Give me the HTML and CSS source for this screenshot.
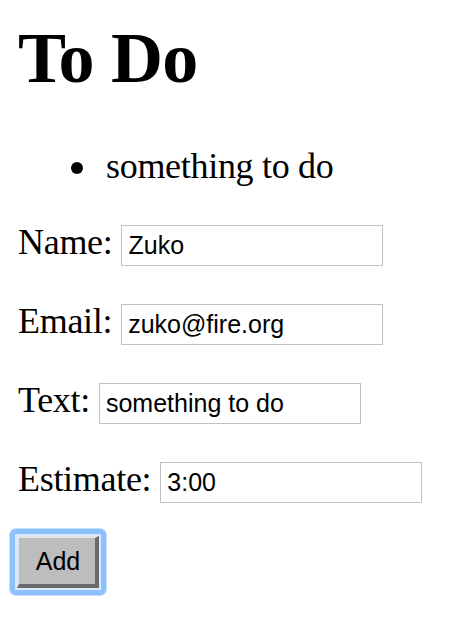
FILE: index.html
```html
<!DOCTYPE html>
<html>
<head>
<meta charset="utf-8">
<link rel="stylesheet" href="styles.css">
</head>
<body>
<main class="page">
<h1 class="title">To Do</h1>
<ul class="todo-list">
  <li class="todo-item">something to do</li>
</ul>
<form class="todo-form">
  <div class="row"><label class="label">Name:</label><input class="field" type="text" value="Zuko"></div>
  <div class="row"><label class="label">Email:</label><input class="field" type="text" value="zuko@fire.org"></div>
  <div class="row"><label class="label">Text:</label><input class="field" type="text" value="something to do"></div>
  <div class="row"><label class="label">Estimate:</label><input class="field" type="text" value="3:00"></div>
  <div class="focus-ring"><button class="add-btn" type="button">Add</button></div>
</form>
</main>
</body>
</html>
```

FILE: styles.css
```css
html, body {
  background: #fff;
}
body {
  margin: 0;
  font-family: "Liberation Serif", "Times New Roman", serif;
  font-size: 36px;
  letter-spacing: -0.3px;
  color: #000;
}
.page {
  padding: 18px 18px 18px 8px;
}
.title {
  margin: 0 0 0 10px;
  font-size: 72px;
  line-height: 80px;
  font-weight: bold;
  letter-spacing: -0.8px;
}
.todo-list {
  margin: 48px 0 0 10px;
  padding-left: 53px;
  list-style: none;
  line-height: 41px;
}
.todo-item::before {
  content: "";
  display: inline-block;
  width: 12px;
  height: 12px;
  border-radius: 50%;
  background: #000;
  margin-right: 23px;
  vertical-align: 4px;
}
.todo-form {
  margin: 0;
}
.row {
  display: flex;
  align-items: baseline;
  gap: 9px;
  margin: 35px 0 0 10px;
}
.label {
  line-height: 41px;
}
.field {
  box-sizing: border-box;
  width: 262px;
  height: 41px;
  margin: 0;
  padding: 0 6px;
  border: 1px solid #c2c2c2;
  border-radius: 0;
  font-family: "Liberation Sans", Arial, sans-serif;
  font-size: 25px;
  letter-spacing: 0;
  color: #000;
  background: #fff;
  outline: none;
}
.focus-ring {
  width: fit-content;
  margin: 26px 0 0 2px;
  padding: 7px;
  border-radius: 6px;
  background: #8cc1fd;
  box-shadow: 0 0 0 1px #c3ddfe;
}
.add-btn {
  display: block;
  box-sizing: border-box;
  width: 82px;
  height: 52px;
  margin: 0;
  padding: 0 0 0 2px;
  border-style: solid;
  border-width: 2px 4px 4px 2px;
  border-color: #e4e4e4 #6b6b6b #6b6b6b #e4e4e4;
  background: #bdbdbd;
  box-shadow: 0 0 0 2px #d9eaff;
  font-family: "Liberation Sans", Arial, sans-serif;
  font-size: 25px;
  letter-spacing: 0;
  color: #000;
  text-align: center;
}
```
